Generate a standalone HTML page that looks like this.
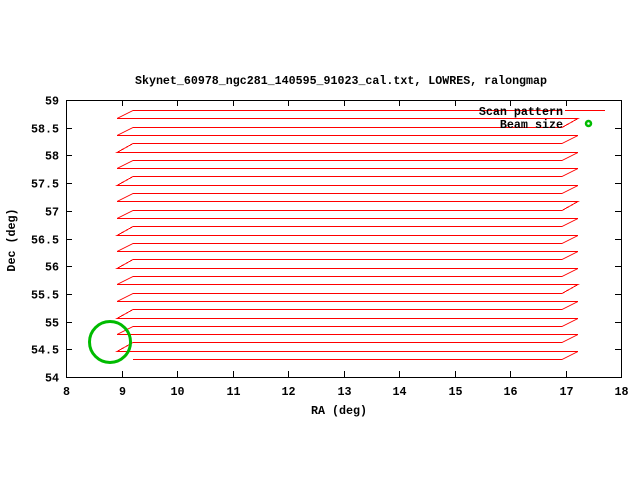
<!DOCTYPE html>
<html><head><meta charset="utf-8"><style>
html,body{margin:0;padding:0;background:#fff;}
svg{display:block;}
text{font-family:"Liberation Mono",monospace;font-size:11.7px;font-weight:bold;fill:#000;}
</style></head><body>
<svg id="s" width="640" height="480" viewBox="0 0 640 480" xmlns="http://www.w3.org/2000/svg" shape-rendering="crispEdges">
<rect width="640" height="480" fill="#fff"/>
<text x="341" y="84" text-anchor="middle" textLength="412" lengthAdjust="spacingAndGlyphs">Skynet_60978_ngc281_140595_91023_cal.txt, LOWRES, ralongmap</text>
<g id="ticks" stroke="#000" stroke-width="1"></g>
<g id="labels"></g>
<polyline id="scan" fill="none" stroke="#f00" stroke-width="1"/>
<rect x="66.5" y="100.5" width="555" height="277" fill="none" stroke="#000"/>
<text x="563" y="115" text-anchor="end">Scan pattern</text>
<line x1="565" y1="110.5" x2="605" y2="110.5" stroke="#f00"/>
<text x="563" y="128" text-anchor="end">Beam size</text>
<circle cx="588.5" cy="123.5" r="2.5" fill="none" stroke="#0b0" stroke-width="2.5" shape-rendering="auto"/>
<circle cx="110" cy="342" r="20.5" fill="none" stroke="#0b0" stroke-width="3" shape-rendering="auto"/>
<text x="339" y="414" text-anchor="middle">RA (deg)</text>
<text transform="translate(15,240) rotate(-90)" text-anchor="middle">Dec (deg)</text>
</svg>
<script>
var NS="http://www.w3.org/2000/svg",t=document.getElementById('ticks'),l=document.getElementById('labels');
function el(p,n,a,txt){var e=document.createElementNS(NS,n);for(var k in a)e.setAttribute(k,a[k]);if(txt)e.textContent=txt;p.appendChild(e);}
for(var i=0;i<=10;i++){var x=Math.round(66+i*55.5)+0.5;
 el(t,'line',{x1:x,y1:100,x2:x,y2:106});el(t,'line',{x1:x,y1:377,x2:x,y2:371});
 el(l,'text',{x:x,y:395,'text-anchor':'middle'},String(8+i));}
var yl=['59','58.5','58','57.5','57','56.5','56','55.5','55','54.5','54'];
for(var i=0;i<=10;i++){var y=Math.round(100+i*27.7)+0.5;
 el(t,'line',{x1:66,y1:y,x2:72,y2:y});el(t,'line',{x1:621,y1:y,x2:615,y2:y});
 el(l,'text',{x:59,y:y+4,'text-anchor':'end'},yl[i]);}
var p=[];
for(var k=0;k<31;k++){var y=Math.round(110+k*8.3)+0.5;
 if(k%2==0){p.push('562,'+y);p.push('133,'+y);}else{p.push('117,'+y);p.push('578,'+y);}}
document.getElementById('scan').setAttribute('points',p.join(' '));
</script>
</body></html>
